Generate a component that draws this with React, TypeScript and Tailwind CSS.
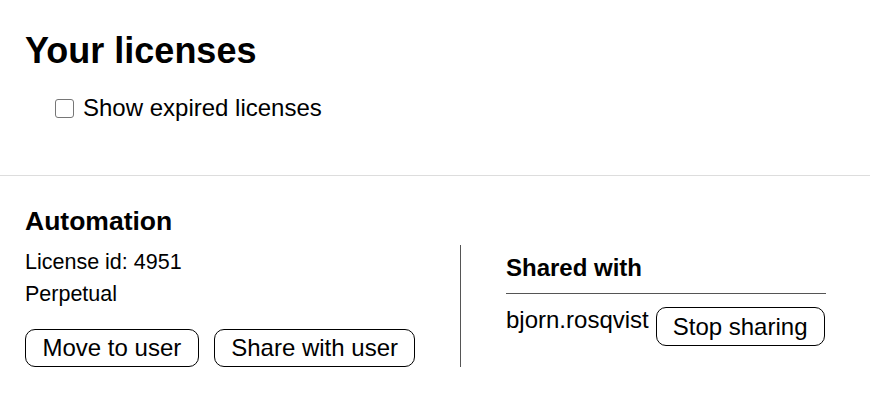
import React from "react";

export default function App() {
  return (
    <div className="w-[870px] h-[393px] bg-white text-black font-['Liberation_Sans',Arial,sans-serif] overflow-hidden">
      <div className="h-[176px] border-b border-[#dddddd] pt-[31px]">
        <h1 className="ml-[25px] text-[36px] leading-[40px] font-bold">Your licenses</h1>
        <label className="mt-[23px] ml-[55px] flex items-center h-[28px] text-[24px] leading-[28px]">
          <span className="w-[19px] h-[19px] border-[1.5px] border-[#767676] rounded-[3px] bg-white mr-[9px] mt-[1px]" />
          <span>Show expired licenses</span>
        </label>
      </div>
      <div className="px-[25px] pt-[30px]">
        <h3 className="text-[26.5px] leading-[30px] font-bold">Automation</h3>
        <div className="mt-[9px] flex">
          <div className="w-[436px] border-r border-[#555555] pt-[1px]">
            <p className="text-[21.5px] leading-[32px]">License id: 4951</p>
            <p className="text-[21.5px] leading-[32px]">Perpetual</p>
            <div className="mt-[19px] flex gap-[15px]">
              <button className="h-[38px] px-[16.5px] rounded-[10px] border border-black bg-white text-[24px] leading-[26px]">Move to user</button>
              <button className="h-[38px] px-[16.5px] rounded-[10px] border border-black bg-white text-[24px] leading-[26px]">Share with user</button>
            </div>
          </div>
          <div className="pl-[45px] pt-[8px]">
            <div className="w-[320px] border-b border-[#555555] pb-[10px]">
              <h4 className="text-[24px] leading-[30px] font-bold">Shared with</h4>
            </div>
            <div className="mt-[12px] flex items-start">
              <span className="text-[24px] leading-[27px]">bjorn.rosqvist</span>
              <button className="ml-[7px] mt-[1px] h-[39px] px-4 rounded-[10px] border border-black bg-white text-[24px] leading-[26px]">Stop sharing</button>
            </div>
          </div>
        </div>
      </div>
    </div>
  );
}
